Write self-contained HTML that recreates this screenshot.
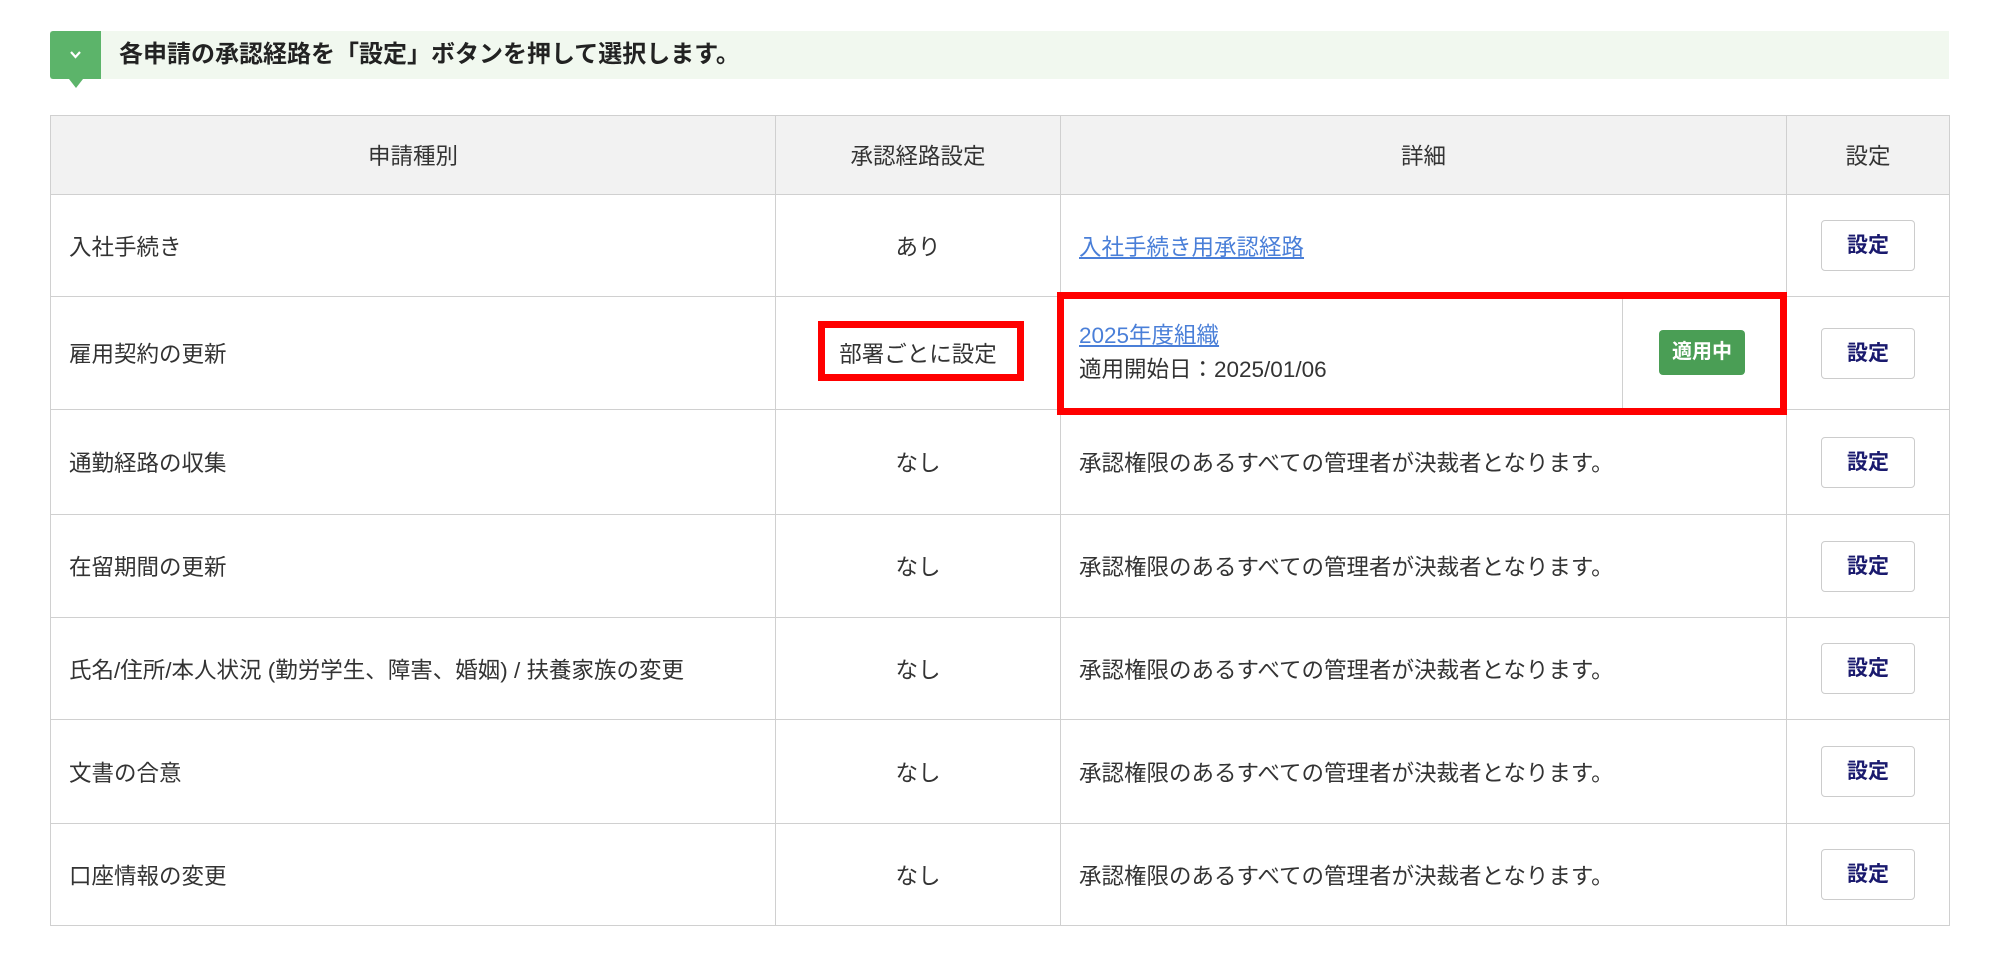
<!DOCTYPE html>
<html><head><meta charset="utf-8"><style>
body{margin:0;width:2000px;height:975px;background:#fff;font-family:"Liberation Sans","Noto Sans CJK JP",sans-serif;color:#333;position:relative;overflow:hidden}
.banner{position:absolute;left:50px;top:31px;width:1899px;height:48px;background:#f1f8ef}
.gsq{position:absolute;left:50px;top:31px;width:51px;height:48px;background:#5cb46a;border-radius:3px 0 0 3px}
.gsq:after{content:"";position:absolute;left:19px;top:48px;border-left:7px solid transparent;border-right:7px solid transparent;border-top:9px solid #5cb46a}
.btitle{position:absolute;left:119px;top:31px;line-height:48px;font-size:24px;font-weight:bold;color:#222}
table{position:absolute;left:50px;top:115px;width:1900px;border-collapse:collapse;font-size:22.5px}
td,th{border:1.5px solid #d0d0d0;padding:0 18px;font-weight:normal}
th{background:#f2f2f2;height:78px;text-align:center}
.c{text-align:center}
a{color:#4a7fd8;text-decoration:underline}
.btn{display:inline-block;width:92px;height:49px;line-height:49px;border:1.5px solid #ccc;border-radius:4px;font-weight:bold;color:#1a1a6e;text-align:center;font-size:21px;background:#fff}
.red{position:absolute;border:7px solid #ff0000;box-sizing:border-box}
.badge{position:absolute;left:1659px;top:330px;width:86px;height:45px;background:#4a9e55;color:#fff;font-weight:bold;font-size:20px;line-height:45px;text-align:center;border-radius:4px}
</style></head><body>
<div class="banner"></div><div class="gsq"><svg width="51" height="48" style="position:absolute;left:0;top:0"><path d="M21 21l4.5 5 4.5-5" fill="none" stroke="#fff" stroke-width="2.2"/></svg></div>
<div class="btitle">各申請の承認経路を「設定」ボタンを押して選択します。</div>
<table>
<colgroup><col style="width:725px"><col style="width:285px"><col style="width:726px"><col></colgroup>
<tr><th>申請種別</th><th>承認経路設定</th><th>詳細</th><th>設定</th></tr>
<tr style="height:102px"><td>入社手続き</td><td class="c">あり</td><td><a>入社手続き用承認経路</a></td><td class="c"><span class="btn">設定</span></td></tr>
<tr style="height:113px"><td>雇用契約の更新</td><td class="c">部署ごとに設定</td><td style="padding:0;position:relative"><div style="padding-left:18px;line-height:34px"><a>2025年度組織</a><br>適用開始日：2025/01/06</div><div style="position:absolute;left:561px;top:0;bottom:0;border-left:1.5px solid #d0d0d0"></div></td><td class="c"><span class="btn">設定</span></td></tr>
<tr style="height:105px"><td>通勤経路の収集</td><td class="c">なし</td><td>承認権限のあるすべての管理者が決裁者となります。</td><td class="c"><span class="btn">設定</span></td></tr>
<tr style="height:103px"><td>在留期間の更新</td><td class="c">なし</td><td>承認権限のあるすべての管理者が決裁者となります。</td><td class="c"><span class="btn">設定</span></td></tr>
<tr style="height:102px"><td>氏名/住所/本人状況 (勤労学生、障害、婚姻) / 扶養家族の変更</td><td class="c">なし</td><td>承認権限のあるすべての管理者が決裁者となります。</td><td class="c"><span class="btn">設定</span></td></tr>
<tr style="height:104px"><td>文書の合意</td><td class="c">なし</td><td>承認権限のあるすべての管理者が決裁者となります。</td><td class="c"><span class="btn">設定</span></td></tr>
<tr style="height:102px"><td>口座情報の変更</td><td class="c">なし</td><td>承認権限のあるすべての管理者が決裁者となります。</td><td class="c"><span class="btn">設定</span></td></tr>
</table>
<div class="badge">適用中</div>
<div class="red" style="left:818px;top:321px;width:206px;height:60px"></div>
<div class="red" style="left:1057px;top:292px;width:730px;height:123px"></div>
</body></html>
